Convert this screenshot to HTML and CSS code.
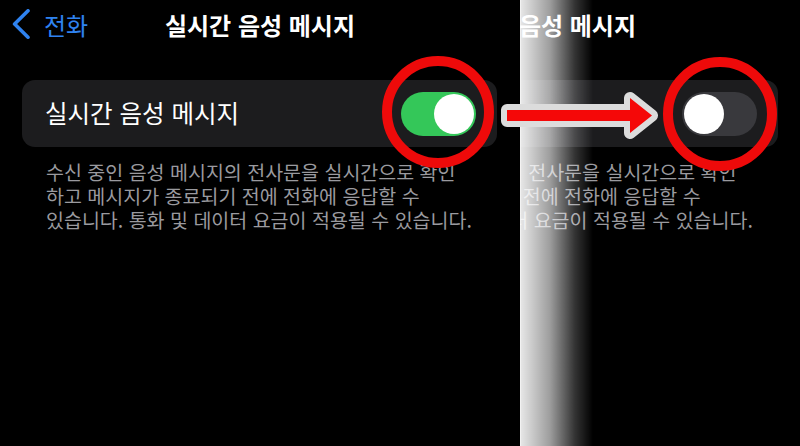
FILE: index.html
```html
<!DOCTYPE html>
<html lang="ko">
<head>
    <meta charset="UTF-8">
    <title>실시간 음성 메시지</title>
    <link rel="stylesheet" href="styles.css">
</head>
<body>
    <div class="frame">
        <!-- 켜진 상태 -->
        <section class="shot shot-on">
            <div class="screen">
                <header class="nav">
                    <a class="back">
                        <svg width="18" height="30" viewBox="0 0 18 30"><path d="M16 1.8 L2.6 15 L16 28.2" fill="none" stroke="currentColor" stroke-width="3.6" stroke-linecap="round" stroke-linejoin="round"/></svg>
                        <span>전화</span>
                    </a>
                    <h1 class="title">실시간 음성 메시지</h1>
                    <span></span>
                </header>
                <div class="card">
                    <span class="label">실시간 음성 메시지</span>
                    <span class="switch on"><span class="knob"></span></span>
                </div>
                <p class="note">수신 중인 음성 메시지의 전사문을 실시간으로 확인<br>하고 메시지가 종료되기 전에 전화에 응답할 수<br>있습니다. 통화 및 데이터 요금이 적용될 수 있습니다.</p>
            </div>
        </section>

        <!-- 꺼진 상태 -->
        <section class="shot shot-off">
            <div class="screen">
                <header class="nav">
                    <a class="back">
                        <svg width="18" height="30" viewBox="0 0 18 30"><path d="M16 1.8 L2.6 15 L16 28.2" fill="none" stroke="currentColor" stroke-width="3.6" stroke-linecap="round" stroke-linejoin="round"/></svg>
                        <span>전화</span>
                    </a>
                    <h1 class="title">실시간 음성 메시지</h1>
                    <span></span>
                </header>
                <div class="card">
                    <span class="label">실시간 음성 메시지</span>
                    <span class="switch"><span class="knob"></span></span>
                </div>
                <p class="note">수신 중인 음성 메시지의 전사문을 실시간으로 확인<br>하고 메시지가 종료되기 전에 전화에 응답할 수<br>있습니다. 통화 및 데이터 요금이 적용될 수 있습니다.</p>
            </div>
        </section>

        <svg class="marks" width="800" height="446" viewBox="0 0 800 446">
            <circle cx="438" cy="112" r="51" fill="none" stroke="#ee0a0a" stroke-width="10"/>
            <circle cx="720" cy="114" r="52" fill="none" stroke="#ee0a0a" stroke-width="10"/>
            <polygon points="507,110 630,110 630,98 652,115.5 630,133 630,121 507,121" fill="#f50808" stroke="#dcdcdc" stroke-width="12" stroke-linejoin="round" paint-order="stroke"/>
        </svg>
    </div>
</body>
</html>
```

FILE: styles.css
```css
body {
    margin: 0;
    background: #000;
    font-family: "Noto Sans CJK KR", "Noto Sans", sans-serif;
}
.frame {
    position: relative;
    display: flex;
    width: 800px;
    height: 446px;
    overflow: hidden;
    background: #000;
}
.shot {
    flex: none;
    height: 100%;
    overflow: hidden;
}
.shot-on { width: 520px; }
.shot-off {
    position: relative;
    width: 280px;
}
.shot-off .screen { margin-left: -239px; }
.shot-off::after {
    content: "";
    position: absolute;
    left: 0;
    top: 0;
    width: 72px;
    height: 100%;
    border-left: 1px solid rgba(255, 255, 255, 0.95);
    background: linear-gradient(to right,
        rgba(255, 255, 255, 0.9) 0%,
        rgba(255, 255, 255, 0.62) 40%,
        rgba(255, 255, 255, 0.2) 75%,
        rgba(255, 255, 255, 0) 100%);
}
.screen {
    width: 520px;
}
.nav {
    display: grid;
    grid-template-columns: 1fr auto 1fr;
    align-items: center;
    height: 48px;
}
.back {
    display: flex;
    align-items: center;
    gap: 14px;
    padding-left: 12px;
    color: #2f83f0;
    font-size: 24px;
}
.title {
    margin: 0;
    color: #fff;
    font-size: 24px;
    font-weight: 600;
}
.card {
    display: flex;
    align-items: center;
    justify-content: space-between;
    height: 67px;
    margin: 32px 23px 0 22px;
    padding: 0 21px 0 23px;
    background: #1c1c1e;
    border-radius: 13px;
}
.label {
    color: #fff;
    font-size: 24.5px;
    margin-top: -3px;
}
.switch {
    display: flex;
    align-items: center;
    justify-content: flex-start;
    box-sizing: border-box;
    width: 75px;
    height: 44px;
    padding: 2px;
    border-radius: 22px;
    background: #39393d;
}
.switch.on {
    justify-content: flex-end;
    background: #34c759;
}
.knob {
    width: 40px;
    height: 40px;
    border-radius: 50%;
    background: #fff;
}
.note {
    margin: 13px 0 0 46px;
    color: #9a9a9f;
    font-size: 19.5px;
    line-height: 24px;
    white-space: nowrap;
}
.marks {
    position: absolute;
    left: 0;
    top: 0;
}
```
